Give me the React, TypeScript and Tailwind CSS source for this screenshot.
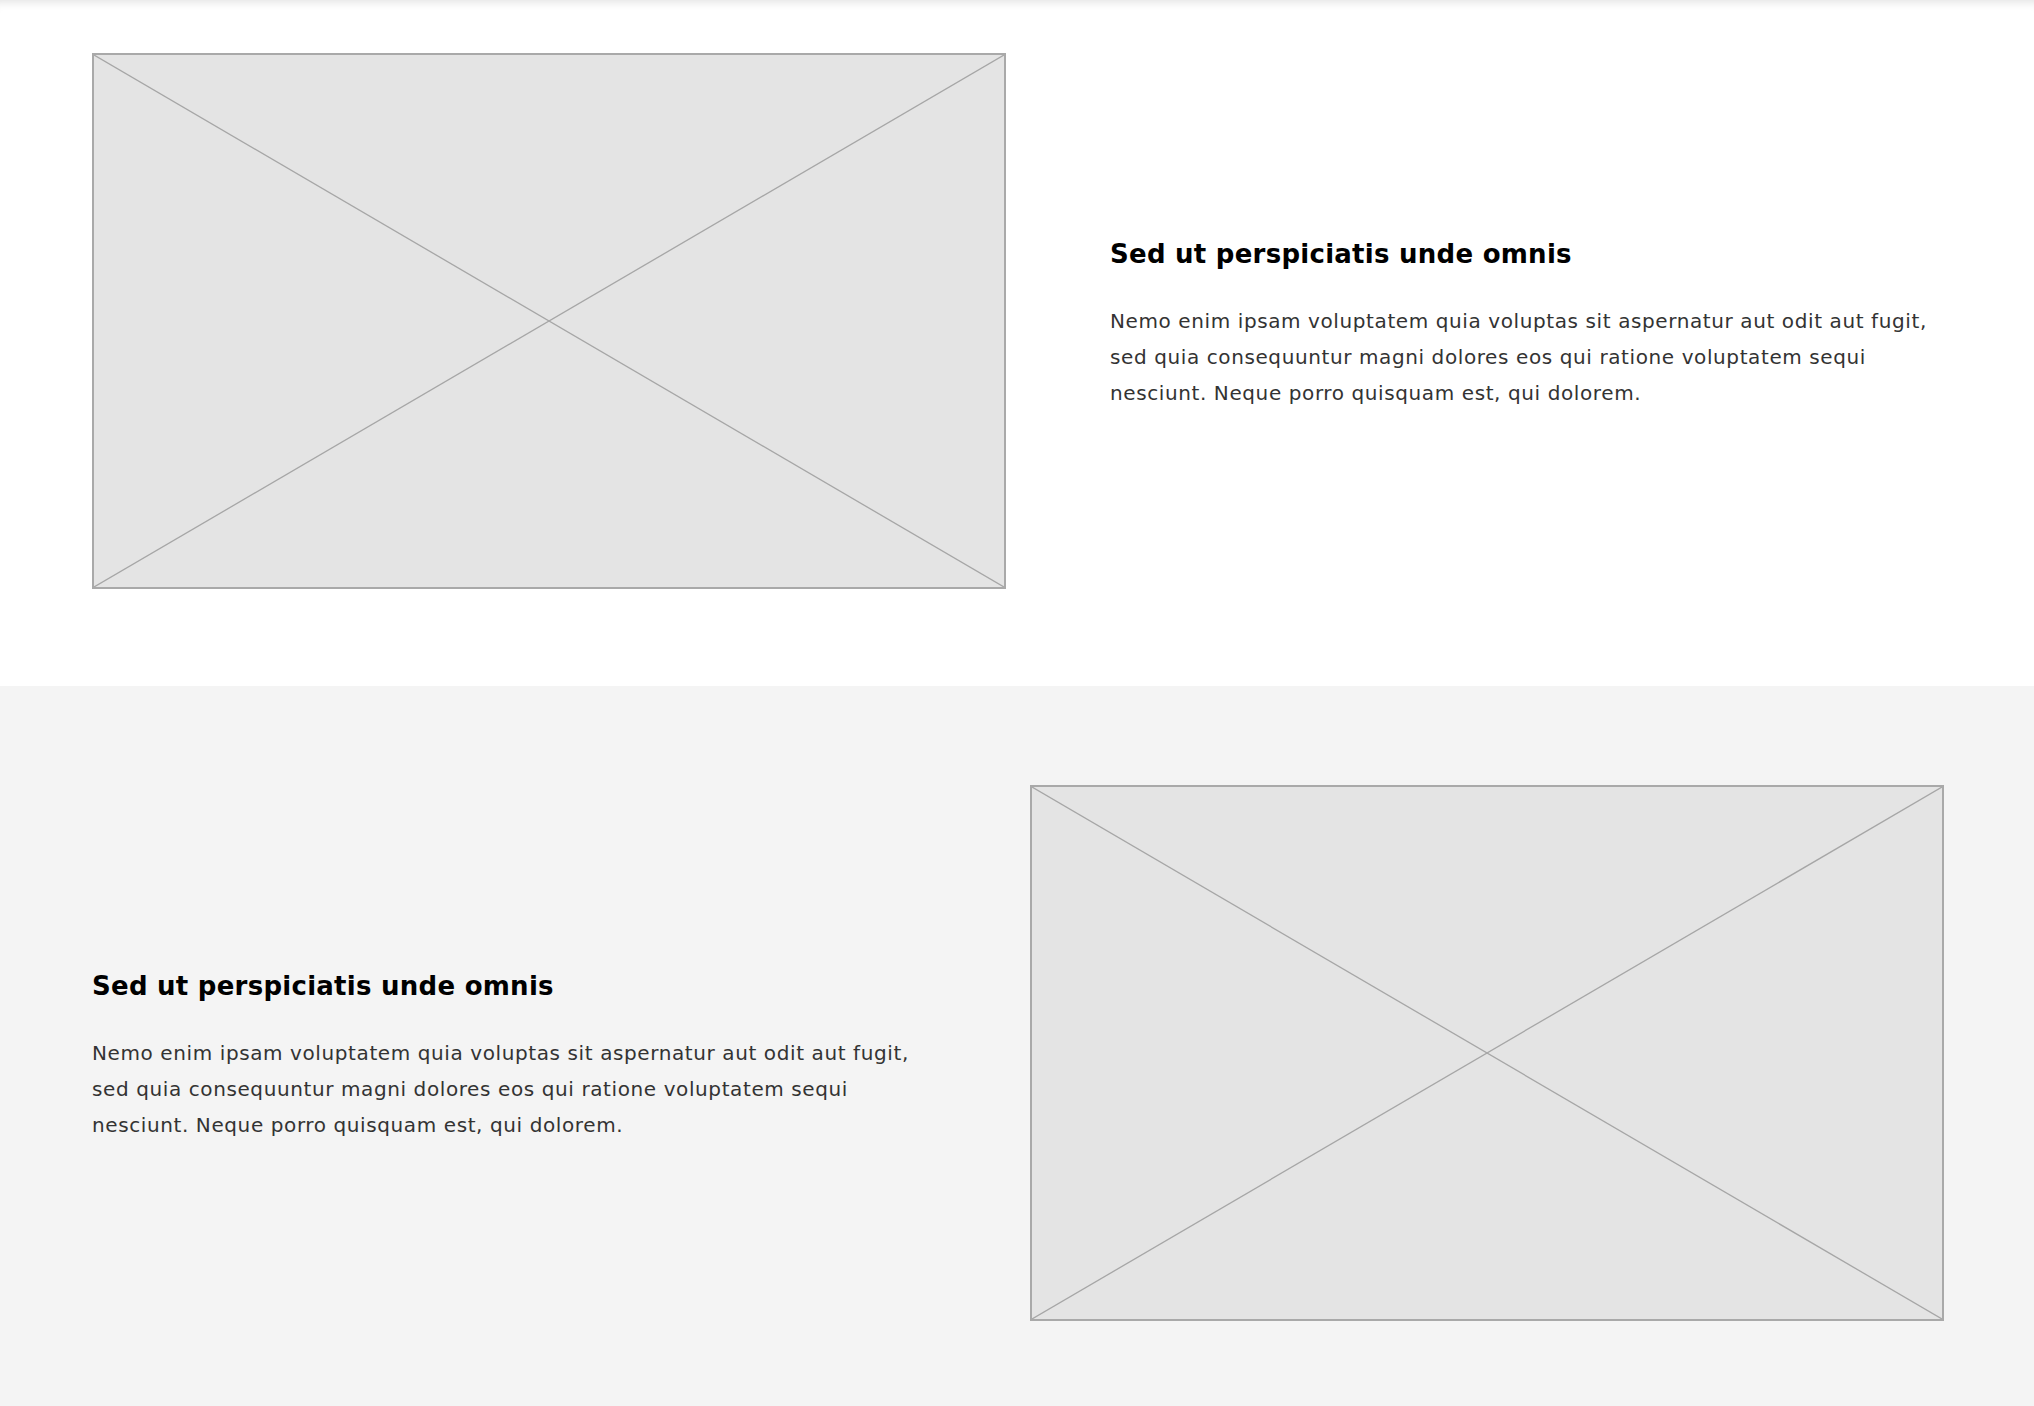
const Placeholder = () => (
  <div className="relative h-[536px] w-full border-2 border-[#a9a9a9] bg-[#e4e4e4]">
    <svg className="absolute inset-0 h-full w-full" viewBox="0 0 100 100" preserveAspectRatio="none">
      <line x1="0" y1="0" x2="100" y2="100" stroke="#a6a6a6" strokeWidth="1.3" vectorEffect="non-scaling-stroke" />
      <line x1="100" y1="0" x2="0" y2="100" stroke="#a6a6a6" strokeWidth="1.3" vectorEffect="non-scaling-stroke" />
    </svg>
  </div>
);

const Copy = ({ className = "" }: { className?: string }) => (
  <div className={`flex flex-col pt-[7px] ${className}`}>
    <h2 className="mb-[32px] text-[26px] font-bold leading-[1.3] tracking-[0.01em] text-black">
      Sed ut perspiciatis unde omnis
    </h2>
    <p className="text-[20px] leading-[36px] tracking-[0.03em] text-[#333]">
      Nemo enim ipsam voluptatem quia voluptas sit aspernatur aut odit aut fugit, sed quia consequuntur magni dolores eos
      qui ratione voluptatem sequi nesciunt. Neque porro quisquam est, qui dolorem.
    </p>
  </div>
);

export default function App() {
  return (
    <div className="min-h-[1406px] bg-[#f4f4f4] font-['DejaVu_Sans',sans-serif]">
      <section className="bg-white pl-[92px] pr-[90px] pt-[53px] pb-[97px] shadow-[inset_0_10px_10px_-8px_rgba(0,0,0,0.12)]">
        <div className="grid grid-cols-2 items-center gap-6">
          <Placeholder />
          <Copy className="pl-[80px]" />
        </div>
      </section>
      <section className="bg-[#f4f4f4] pl-[92px] pr-[90px] pt-[99px] pb-[86px]">
        <div className="grid grid-cols-2 items-center gap-6">
          <Copy className="pr-[81px]" />
          <Placeholder />
        </div>
      </section>
    </div>
  );
}
